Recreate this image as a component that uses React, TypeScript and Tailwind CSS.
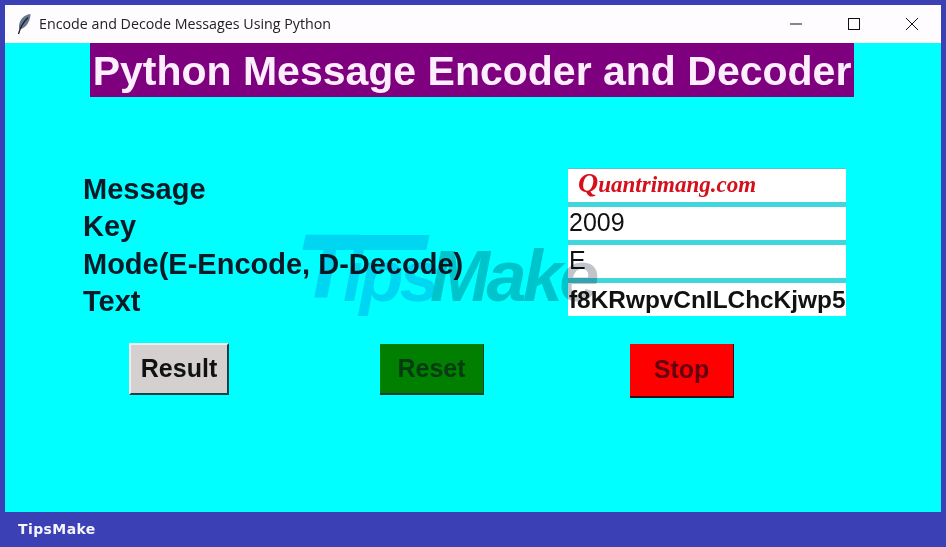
import React from "react";

const sans = "font-['Liberation_Sans',Arial,sans-serif]";

function Feather() {
  return (
    <svg width="16" height="22" viewBox="0 0 16 22" className="shrink-0">
      <path d="M14.500 1C9.500 1.500 5 5 3.500 10c-.8 3-.5 5-.2 6.500 3.500-.5 7-3 9-7 1.500-3 2.200-6 2.200-8.500Z" fill="#66768e" />
      <path d="M12 4.500C8 8.500 4.500 13 2.500 21" stroke="#1c2430" strokeWidth="1.400" fill="none" />
    </svg>
  );
}

function TitleBar() {
  return (
    <div className="h-[38px] bg-[#fffcff] flex items-center shrink-0">
      <div className="pl-[11px] pr-[7px] flex items-center">
        <Feather />
      </div>
      <span className="font-['Open_Sans',sans-serif] text-[14.25px] leading-[36px] text-[#222] flex-1">
        Encode and Decode Messages Using Python
      </span>
      <div className="flex items-center text-[#111]">
        <div className="w-[58px] flex justify-center">
          <svg width="14" height="14" viewBox="0 0 14 14"><path d="M1 7h12" stroke="currentColor" strokeWidth="1" /></svg>
        </div>
        <div className="w-[58px] flex justify-center">
          <svg width="14" height="14" viewBox="0 0 14 14"><rect x="1.500" y="1.500" width="11" height="11" fill="none" stroke="currentColor" strokeWidth="1" /></svg>
        </div>
        <div className="w-[58px] flex justify-center">
          <svg width="14" height="14" viewBox="0 0 14 14"><path d="M1 1l12 12M13 1L1 13" stroke="currentColor" strokeWidth="1" /></svg>
        </div>
      </div>
    </div>
  );
}

function Label({ text }: { text: string }) {
  return (
    <div className={`h-[37.3px] text-[29px] leading-[37.3px] font-bold text-[#0b1a26] whitespace-nowrap ${sans}`}>
      {text}
    </div>
  );
}

function Field({ children }: { children: React.ReactNode }) {
  return (
    <div className={`h-[33px] bg-white overflow-hidden whitespace-nowrap pl-[1px] text-[#111] ${sans}`}>
      {children}
    </div>
  );
}

// blended over the page so dark text keeps showing through it
function Watermark() {
  return (
    <div className={`absolute left-[293px] top-[190px] w-[310px] h-[90px] mix-blend-multiply pointer-events-none font-bold italic whitespace-nowrap ${sans}`}>
      <div className="absolute left-[6px] top-[2px] w-[124px] h-[15px] bg-[#d6d6f2] -skew-x-12" />
      <span className="absolute left-[0px] top-[-11px] text-[90px] leading-none text-[#d6d6f2]">T</span>
      <span className="absolute left-[45px] top-[3px] text-[72px] leading-[80px] tracking-[-3.6px] text-[#d6d6f2]">ips</span>
      <span className="absolute left-[132px] top-[3px] text-[72px] leading-[80px] tracking-[-3.6px] text-[#c2c4cc]">Make</span>
    </div>
  );
}

export default function App() {
  return (
    <div className="w-[946px] h-[547px] bg-[#3b40b4] flex flex-col overflow-hidden">
      <div className="flex-1 flex flex-col pt-[5px] px-[5px] min-h-0">
        <TitleBar />
        <div className="flex-1 bg-[#00ffff] relative flex flex-col">
          <div className="h-[54px] w-[764px] ml-[85px] bg-[#7f007f] flex items-center justify-center">
            <h1 className={`text-[41px] leading-none font-bold pt-[2px] text-[#fdeefd] whitespace-nowrap ${sans}`}>
              Python Message Encoder and Decoder
            </h1>
          </div>

          <div className="mt-[71px] ml-[78px] flex items-start h-[152px]">
            <div className="w-[485px] flex flex-col pt-[3px]">
              <Label text="Message" />
              <Label text="Key" />
              <Label text="Mode(E-Encode, D-Decode)" />
              <Label text="Text" />
            </div>
            <div className="w-[278px] bg-[#3fd6dc] flex flex-col gap-[5px] border-t border-[#50c8d0]">
              <Field>
                <span className="font-['Liberation_Serif',serif] italic font-bold text-[23px] leading-[30px] text-[#d4101c] pl-[9px] block">
                  <span className="text-[28px] leading-none">Q</span>uantrimang.com
                </span>
              </Field>
              <Field>
                <span className="text-[25px] leading-[31px] block">2009</span>
              </Field>
              <Field>
                <span className="text-[25px] leading-[30px] block">E</span>
              </Field>
              <Field>
                <span className="text-[24.4px] leading-[33px] font-bold block">f8KRwpvCnILChcKjwp5</span>
              </Field>
            </div>
          </div>

          <div className="mt-[23px] flex items-start">
            <button className={`ml-[124px] w-[100px] h-[52px] bg-[#d4d0d0] border-2 border-t-[#eee] border-l-[#eee] border-b-[#14404a] border-r-[#14404a] text-[25px] font-bold text-[#111] ${sans}`}>
              Result
            </button>
            <button className={`ml-[151px] mt-[1px] w-[104px] h-[51px] bg-[#007f00] border-b-2 border-r border-[#0a4030] text-[25px] font-bold text-[#053c10] ${sans}`}>
              Reset
            </button>
            <button className={`ml-[146px] mt-[1px] w-[104px] h-[54px] bg-[#ff0000] border-b-2 border-r border-[#301018] text-[25px] font-bold text-[#640010] ${sans}`}>
              Stop
            </button>
          </div>

          <Watermark />
        </div>
      </div>
      <div className="h-[35px] shrink-0 pl-[18px] flex items-center text-[14px] font-bold tracking-[0.4px] text-[#f4f4ff] font-['DejaVu_Sans',sans-serif]">
        TipsMake
      </div>
    </div>
  );
}
